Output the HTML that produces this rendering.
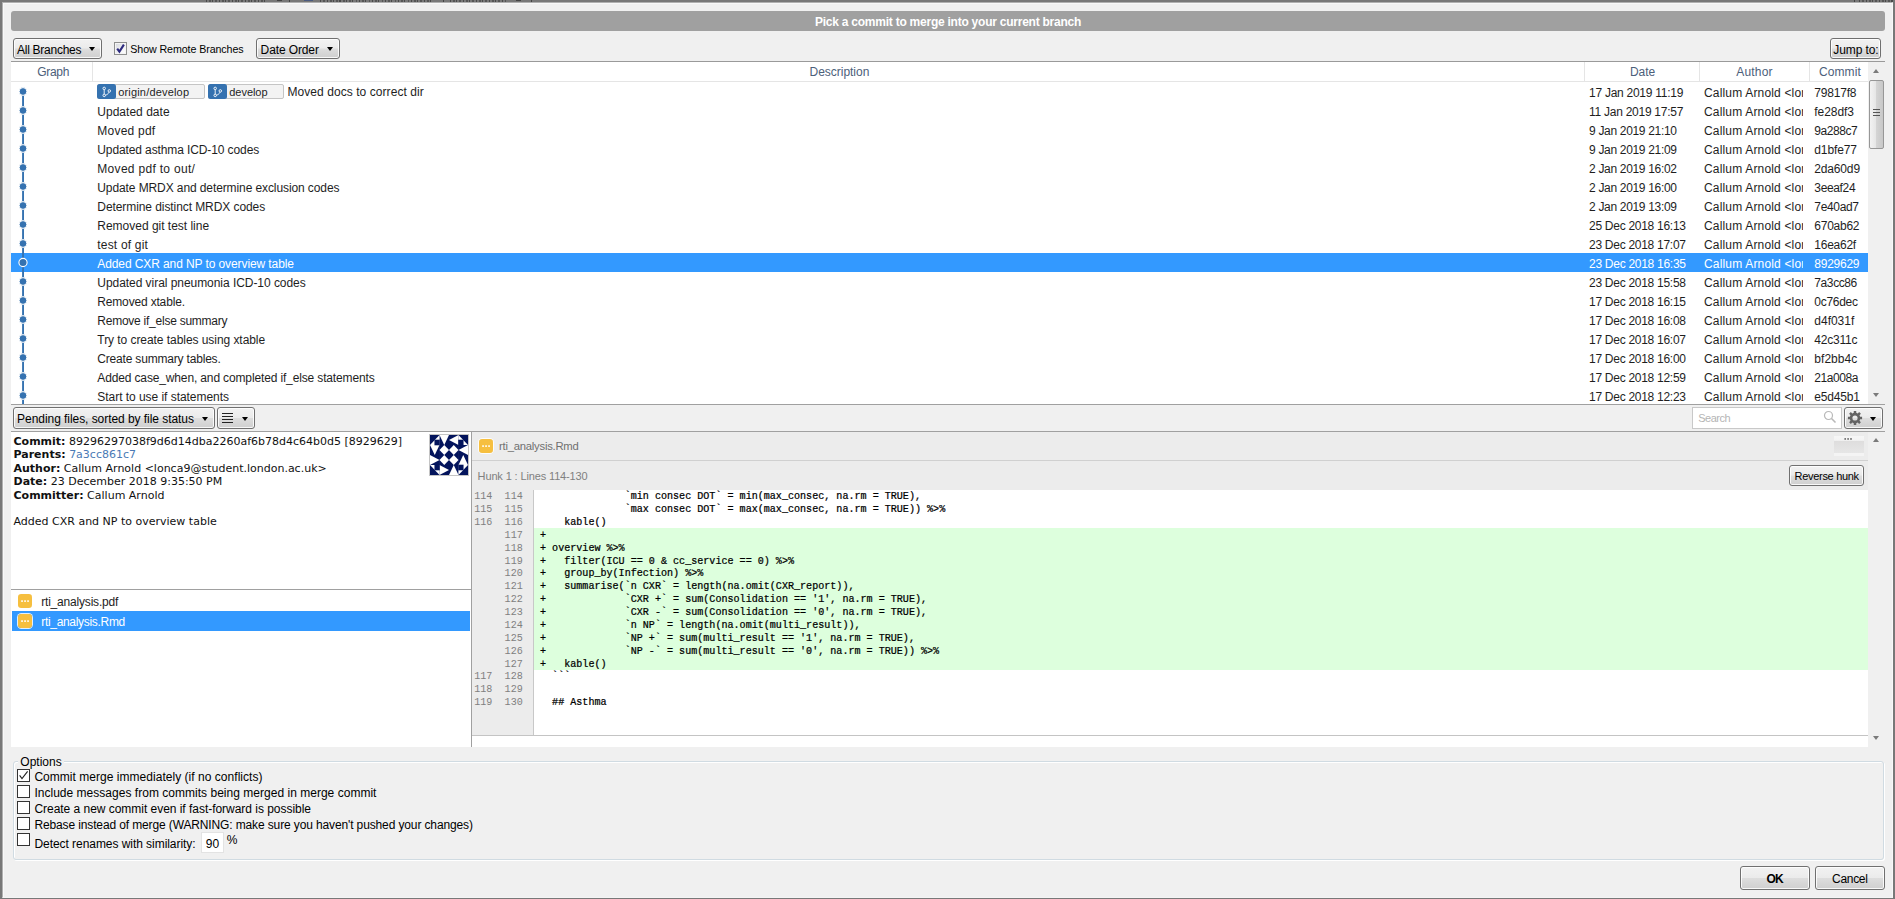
<!DOCTYPE html>
<html lang="en"><head><meta charset="utf-8"><title>Merge</title>
<style>
html,body{margin:0;padding:0;}
body{width:1895px;height:899px;overflow:hidden;background:#f0f0f0;font-family:"Liberation Sans",sans-serif;font-size:12px;color:#1e1e1e;}
#dlg{position:absolute;left:0;top:0;width:1895px;height:899px;background:#f0f0f0;box-shadow:inset 2px 0 0 #787878,inset -2px 0 0 #787878,inset 0 2px 0 #787878,inset 0 -1px 0 #787878;}
#dlg:before{content:'';position:absolute;left:2px;top:2px;right:2px;bottom:1px;border-style:solid;border-width:1px;border-color:#b0b0b0 #f8f8f8 #f4f4f4 #b0b0b0;box-shadow:inset 1px 1px 0 #f8f8f8;}
#dlg>*{position:absolute;}
#dlg *{box-sizing:border-box;}
i{font-style:normal;display:block;}
.t{white-space:pre;color:#1e1e1e;}
.banner{left:11px;top:11px;width:1874px;height:20px;background:#a0a0a0;border-radius:3px;}
.bn{color:#fff;font-weight:700;line-height:20px;margin-top:1px;}
.btn{border:1px solid #707070;border-radius:3px;background:linear-gradient(#f2f2f2 0%,#ebebeb 48%,#dddddd 52%,#cfcfcf 100%);box-shadow:inset 0 0 0 1px rgba(255,255,255,.85);}
.b21{line-height:21px;color:#000;margin-top:2px;}
.b22{line-height:22px;color:#000;margin-top:1px;}
.arr{width:0;height:0;margin-left:0;margin-top:-0.4px;border-left:3.6px solid transparent;border-right:3.6px solid transparent;border-top:4.4px solid #000;}
.chk,.cb{width:13px;height:13px;border:1px solid #8e8f8f;background:#fff;}
.chk{background:linear-gradient(135deg,#d4d7dd,#f4f4f6 60%,#fff);box-shadow:inset 0 0 0 1px #f4f4f4;}
.chk svg,.cb svg{position:absolute;left:-1px;top:-1px;}
.cb{border-color:#333;}
.l8{font-size:10.67px;line-height:15px;color:#000;margin-top:1px;}
.table{left:11px;top:61px;width:1874px;height:343px;background:#fff;border-top:1px solid #9a9a9a;}
.thead{left:11px;top:81px;width:1857px;height:1px;background:#e5e5e5;}
.th{line-height:19px;color:#4c607a;margin-top:1px;}
.vsep{width:1px;top:62px;height:19px;background:#e5e5e5;}
.selrow{left:11px;width:1857px;height:19px;background:#3399ff;}
.td{line-height:19px;margin-top:2px;}
.s{color:#fff;}
.au{width:99px;overflow:hidden;}
.tag{height:15px;border:1px solid #c5c5c5;border-radius:2px;background:#f3f3f3;}
.ti{position:absolute;left:-1px;top:-1px;width:18.5px;height:15px;background:#3572b0;border-radius:2.5px;}
.ti svg{position:absolute;left:0;top:0;}
.tt{font-size:11px;line-height:19px;margin-top:2px;}
.vsb{width:17px;background:#f0f0f0;}
.sa{position:absolute;left:5px;width:0;height:0;border-left:3.5px solid transparent;border-right:3.5px solid transparent;}
.sa.up{border-bottom:4px solid #7a7a7a;}
.sa.dn{border-top:4px solid #7a7a7a;}
.thumb{position:absolute;left:1px;width:15px;border:1px solid #979797;border-radius:2px;background:linear-gradient(90deg,#f3f3f3,#e6e6e6 45%,#d4d4d4 50%,#c8c8c8);}
.grip{position:absolute;left:3px;top:28px;width:7px;height:7px;background:linear-gradient(#555 0,#555 1px,transparent 1px,transparent 3px,#555 3px,#555 4px,transparent 4px,transparent 6px,#555 6px,#555 7px);}
.lines{position:absolute;left:4px;top:5px;width:11px;height:10px;background:linear-gradient(#222 0,#222 1px,transparent 1px,transparent 3px,#222 3px,#222 4px,transparent 4px,transparent 6px,#222 6px,#222 7px,transparent 7px,transparent 9px,#222 9px,#222 10px);}
.search{background:#fff;border:1px solid #c8c8c8;}
.ph{line-height:20px;font-size:11px;color:#b5b5b5;}
.search .mag{position:absolute;right:4px;top:2.3px;}
.gear{position:absolute;left:1.8px;top:2px;}
.hline{height:1px;background:#a0a0a0;}
.vline{width:1px;background:#a0a0a0;}
.info{left:11px;top:432px;width:460px;height:157px;background:#fff;}
.il{font-family:"DejaVu Sans","Liberation Sans",sans-serif;font-size:11px;line-height:13px;color:#111;}
.lnk{color:#4a7ab5;}
.avatar{left:429px;top:434px;width:40px;height:42px;border:1px solid #c4c4c4;background:#fff;}
.avatar svg{display:block;}
.files{left:11px;top:590px;width:460px;height:157px;background:#fff;}
.selfile{left:12px;top:611px;width:458px;height:20px;background:#3399ff;}
.fi{width:14px;height:14px;box-shadow:0 0 0 1px rgba(255,255,255,.85);border-radius:3.5px;}
.fi svg{display:block;}
.fn{line-height:20px;}
.diff{left:472px;top:432px;width:1396px;height:315px;background:#fff;}
.fh{left:472px;top:432px;width:1396px;height:29px;background:#ececec;border-bottom:1px solid #d0d0d0;}
.fhn{line-height:28px;color:#707070;font-size:11.3px;}
.more{left:1834px;top:436px;width:30px;height:20px;background:linear-gradient(#f6f6f6 0,#f3f3f3 22%,#dedddd 25%,#e6e6e6 84%,#f4f4f4 87%,#f4f4f4 100%);}
.hh{left:472px;top:461px;width:1396px;height:29px;background:#ececec;}
.hht{line-height:29px;font-size:11px;color:#808080;margin-top:1px;}
.rh{font-size:11px;margin-top:1px;}
.gut{left:472px;top:490px;width:62px;height:245px;background:#ececec;border-right:1px solid #c8c8c8;}
.addbg{left:534px;top:528px;width:1334px;height:142px;background:#ddffdd;}
.ln,.ct{font-family:"Liberation Mono",monospace;font-size:10.08px;line-height:13px;}
.ln{color:#808080;}
.ct{color:#000;-webkit-text-stroke:0.22px #000;}
.grp{left:13px;top:761px;width:1871px;height:99px;border:1px solid #d0dbe2;border-radius:3px;box-shadow:inset 1px 1px 0 #fff,1px 1px 0 #fff;}
.gl{background:#f0f0f0;line-height:15px;color:#000;}
.ol{line-height:14px;color:#000;}
.num{width:23px;height:21px;background:#fff;border:1px solid #e3e3e3;}
.peek{left:0;top:0;width:1895px;height:2px;overflow:hidden;}
.peek>*{position:absolute;}
.pkt{top:0;height:2px;background:repeating-linear-gradient(90deg,#3a3a3a 0,#3a3a3a 1px,transparent 1px,transparent 3px,#4a4a4a 3px,#4a4a4a 5px,transparent 5px,transparent 6.5px);opacity:.75;}
.pks{top:0;width:1px;height:2px;background:#444;}
.pka{top:0;width:5px;height:1px;background:#444;}
.pkc{top:0;width:9px;height:1px;background:#4a5a80;}

</style></head>
<body>
<div id="dlg">
<div class="peek"><i class="pkt" style="left:206px;width:61px"></i><i class="pkt" style="left:320px;width:112px"></i><i class="pkt" style="left:450px;width:56px"></i><i class="pkt" style="left:1859px;width:34px"></i><i class="pka" style="left:277px"></i><i class="pks" style="left:289px"></i><i class="pkc" style="left:304px"></i><i class="pks" style="left:443px"></i><i class="pka" style="left:516px"></i><i class="pks" style="left:531px"></i><i class="pks" style="left:1854px"></i></div>
<div class="banner"></div><span class="t bn" style="left:815px;top:11px;letter-spacing:-0.241px;">Pick a commit to merge into your current branch</span>
<div class="btn" style="left:13px;top:38px;width:89px;height:21px"></div><i class="arr" style="left:89px;top:47px"></i><span class="t b21" style="left:17px;top:38px;letter-spacing:-0.265px;">All Branches</span>
<div class="chk" style="left:114px;top:42px"><svg width="13" height="13" viewBox="0 0 13 13"><path d="M3.2 6.6 L5.4 9.6 L9.9 2.6" fill="none" stroke="#2d2a7e" stroke-width="2.1"/></svg></div><span class="t l8" style="left:130.3px;top:41px;letter-spacing:-0.086px;">Show Remote Branches</span>
<div class="btn" style="left:256px;top:38px;width:84px;height:21px"></div><i class="arr" style="left:327px;top:47px"></i><span class="t b21" style="left:260.6px;top:38px;letter-spacing:-0.116px;">Date Order</span>
<div class="btn" style="left:1830px;top:38px;width:51px;height:21px"></div><span class="t b21" style="left:1833.3px;top:38px;letter-spacing:-0.091px;">Jump to:</span>
<div class="table"></div><div class="thead"></div>
<span class="t th" style="left:37.2px;top:62px;letter-spacing:-0.292px;">Graph</span><span class="t th" style="left:809.5px;top:62px;letter-spacing:-0.021px;">Description</span><span class="t th" style="left:1630px;top:62px;letter-spacing:-0.09px;">Date</span><span class="t th" style="left:1736.2px;top:62px;letter-spacing:0.207px;">Author</span><span class="t th" style="left:1818.9px;top:62px;letter-spacing:0.109px;">Commit</span><i class="vsep" style="left:92px"></i><i class="vsep" style="left:1584px"></i><i class="vsep" style="left:1699px"></i><i class="vsep" style="left:1809px"></i>
<div class="tag" style="left:97px;top:84px;width:108px"><i class="ti"><svg width="19" height="15" viewBox="0 0 19 15"><g fill="none" stroke="#fff" stroke-width="0.9"><circle cx="7.2" cy="4.4" r="1.25"/><circle cx="7.2" cy="11.4" r="1.25"/><circle cx="12.3" cy="6.9" r="1.25"/><path d="M7.2 5.7V10.1M12 8.2C11.2 10.2 9.6 10.8 8.4 11.2"/></g></svg></i></div><span class="t tt" style="left:118.2px;top:81px;letter-spacing:0.179px;">origin/develop</span><div class="tag" style="left:208px;top:84px;width:76px"><i class="ti"><svg width="19" height="15" viewBox="0 0 19 15"><g fill="none" stroke="#fff" stroke-width="0.9"><circle cx="7.2" cy="4.4" r="1.25"/><circle cx="7.2" cy="11.4" r="1.25"/><circle cx="12.3" cy="6.9" r="1.25"/><path d="M7.2 5.7V10.1M12 8.2C11.2 10.2 9.6 10.8 8.4 11.2"/></g></svg></i></div><span class="t tt" style="left:229.3px;top:81px;letter-spacing:-0.05px;">develop</span><span class="t td" style="left:287.4px;top:81px;letter-spacing:0.067px;">Moved docs to correct dir</span><span class="t td" style="left:1589px;top:82px;letter-spacing:-0.261px;">17 Jan 2019 11:19</span><span class="t td au" style="left:1704px;top:82px;letter-spacing:0.171px">Callum Arnold &lt;lon</span><span class="t td" style="left:1814.3px;top:82px;letter-spacing:-0.199px;">79817f8</span>
<span class="t td" style="left:97.3px;top:101px;letter-spacing:0.02px;">Updated date</span><span class="t td" style="left:1589px;top:101px;letter-spacing:-0.261px;">11 Jan 2019 17:57</span><span class="t td au" style="left:1704px;top:101px;letter-spacing:0.171px">Callum Arnold &lt;lon</span><span class="t td" style="left:1814.3px;top:101px;letter-spacing:-0.064px;">fe28df3</span>
<span class="t td" style="left:97.3px;top:120px;letter-spacing:0.228px;">Moved pdf</span><span class="t td" style="left:1589px;top:120px;letter-spacing:-0.316px;">9 Jan 2019 21:10</span><span class="t td au" style="left:1704px;top:120px;letter-spacing:0.171px">Callum Arnold &lt;lon</span><span class="t td" style="left:1814.3px;top:120px;letter-spacing:-0.435px;">9a288c7</span>
<span class="t td" style="left:97.3px;top:139px;letter-spacing:-0.11px;">Updated asthma ICD-10 codes</span><span class="t td" style="left:1589px;top:139px;letter-spacing:-0.316px;">9 Jan 2019 21:09</span><span class="t td au" style="left:1704px;top:139px;letter-spacing:0.171px">Callum Arnold &lt;lon</span><span class="t td" style="left:1814.3px;top:139px;letter-spacing:-0.113px;">d1bfe77</span>
<span class="t td" style="left:97.3px;top:158px;letter-spacing:0.304px;">Moved pdf to out/</span><span class="t td" style="left:1589px;top:158px;letter-spacing:-0.316px;">2 Jan 2019 16:02</span><span class="t td au" style="left:1704px;top:158px;letter-spacing:0.171px">Callum Arnold &lt;lon</span><span class="t td" style="left:1814.3px;top:158px;letter-spacing:-0.16px;">2da60d9</span>
<span class="t td" style="left:97.3px;top:177px;letter-spacing:-0.099px;">Update MRDX and determine exclusion codes</span><span class="t td" style="left:1589px;top:177px;letter-spacing:-0.316px;">2 Jan 2019 16:00</span><span class="t td au" style="left:1704px;top:177px;letter-spacing:0.171px">Callum Arnold &lt;lon</span><span class="t td" style="left:1814.3px;top:177px;letter-spacing:-0.342px;">3eeaf24</span>
<span class="t td" style="left:97.3px;top:196px;letter-spacing:-0.078px;">Determine distinct MRDX codes</span><span class="t td" style="left:1589px;top:196px;letter-spacing:-0.316px;">2 Jan 2019 13:09</span><span class="t td au" style="left:1704px;top:196px;letter-spacing:0.171px">Callum Arnold &lt;lon</span><span class="t td" style="left:1814.3px;top:196px;letter-spacing:-0.331px;">7e40ad7</span>
<span class="t td" style="left:97.3px;top:215px;letter-spacing:-0.013px;">Removed git test line</span><span class="t td" style="left:1589px;top:215px;letter-spacing:-0.278px;">25 Dec 2018 16:13</span><span class="t td au" style="left:1704px;top:215px;letter-spacing:0.171px">Callum Arnold &lt;lon</span><span class="t td" style="left:1814.3px;top:215px;letter-spacing:-0.246px;">670ab62</span>
<span class="t td" style="left:97.3px;top:234px;letter-spacing:0.182px;">test of git</span><span class="t td" style="left:1589px;top:234px;letter-spacing:-0.278px;">23 Dec 2018 17:07</span><span class="t td au" style="left:1704px;top:234px;letter-spacing:0.171px">Callum Arnold &lt;lon</span><span class="t td" style="left:1814.3px;top:234px;letter-spacing:-0.256px;">16ea62f</span>
<div class="selrow" style="top:253px"></div><span class="t td s" style="left:97.3px;top:253px;letter-spacing:-0.097px;">Added CXR and NP to overview table</span><span class="t td s" style="left:1589px;top:253px;letter-spacing:-0.278px;">23 Dec 2018 16:35</span><span class="t td au s" style="left:1704px;top:253px;letter-spacing:0.171px">Callum Arnold &lt;lon</span><span class="t td s" style="left:1814.3px;top:253px;letter-spacing:-0.246px;">8929629</span>
<span class="t td" style="left:97.3px;top:272px;letter-spacing:-0.048px;">Updated viral pneumonia ICD-10 codes</span><span class="t td" style="left:1589px;top:272px;letter-spacing:-0.278px;">23 Dec 2018 15:58</span><span class="t td au" style="left:1704px;top:272px;letter-spacing:0.171px">Callum Arnold &lt;lon</span><span class="t td" style="left:1814.3px;top:272px;letter-spacing:-0.396px;">7a3cc86</span>
<span class="t td" style="left:97.3px;top:291px;letter-spacing:-0.17px;">Removed xtable.</span><span class="t td" style="left:1589px;top:291px;letter-spacing:-0.278px;">17 Dec 2018 16:15</span><span class="t td au" style="left:1704px;top:291px;letter-spacing:0.171px">Callum Arnold &lt;lon</span><span class="t td" style="left:1814.3px;top:291px;letter-spacing:-0.282px;">0c76dec</span>
<span class="t td" style="left:97.3px;top:310px;letter-spacing:-0.244px;">Remove if_else summary</span><span class="t td" style="left:1589px;top:310px;letter-spacing:-0.278px;">17 Dec 2018 16:08</span><span class="t td au" style="left:1704px;top:310px;letter-spacing:0.171px">Callum Arnold &lt;lon</span><span class="t td" style="left:1814.3px;top:310px;letter-spacing:-0.007px;">d4f031f</span>
<span class="t td" style="left:97.3px;top:329px;letter-spacing:-0.056px;">Try to create tables using xtable</span><span class="t td" style="left:1589px;top:329px;letter-spacing:-0.278px;">17 Dec 2018 16:07</span><span class="t td au" style="left:1704px;top:329px;letter-spacing:0.171px">Callum Arnold &lt;lon</span><span class="t td" style="left:1814.3px;top:329px;letter-spacing:-0.212px;">42c311c</span>
<span class="t td" style="left:97.3px;top:348px;letter-spacing:-0.186px;">Create summary tables.</span><span class="t td" style="left:1589px;top:348px;letter-spacing:-0.278px;">17 Dec 2018 16:00</span><span class="t td au" style="left:1704px;top:348px;letter-spacing:0.171px">Callum Arnold &lt;lon</span><span class="t td" style="left:1814.3px;top:348px;letter-spacing:0.042px;">bf2bb4c</span>
<span class="t td" style="left:97.3px;top:367px;letter-spacing:-0.141px;">Added case_when, and completed if_else statements</span><span class="t td" style="left:1589px;top:367px;letter-spacing:-0.278px;">17 Dec 2018 12:59</span><span class="t td au" style="left:1704px;top:367px;letter-spacing:0.171px">Callum Arnold &lt;lon</span><span class="t td" style="left:1814.3px;top:367px;letter-spacing:-0.446px;">21a008a</span>
<span class="t td" style="left:97.3px;top:386px;letter-spacing:-0.04px;">Start to use if statements</span><span class="t td" style="left:1589px;top:386px;letter-spacing:-0.278px;">17 Dec 2018 12:23</span><span class="t td au" style="left:1704px;top:386px;letter-spacing:0.171px">Callum Arnold &lt;lon</span><span class="t td" style="left:1814.3px;top:386px;letter-spacing:-0.188px;">e5d45b1</span>
<svg class="graph" style="left:11px;top:82px" width="30" height="322" viewBox="0 0 30 322"><rect x="11.1" y="9.5" width="1.9" height="322" fill="#3572b0"/><circle cx="12" cy="9.5" r="3.9" fill="#3572b0" stroke="#fff" stroke-width="1"/><circle cx="12" cy="28.5" r="3.9" fill="#3572b0" stroke="#fff" stroke-width="1"/><circle cx="12" cy="47.5" r="3.9" fill="#3572b0" stroke="#fff" stroke-width="1"/><circle cx="12" cy="66.5" r="3.9" fill="#3572b0" stroke="#fff" stroke-width="1"/><circle cx="12" cy="85.5" r="3.9" fill="#3572b0" stroke="#fff" stroke-width="1"/><circle cx="12" cy="104.5" r="3.9" fill="#3572b0" stroke="#fff" stroke-width="1"/><circle cx="12" cy="123.5" r="3.9" fill="#3572b0" stroke="#fff" stroke-width="1"/><circle cx="12" cy="142.5" r="3.9" fill="#3572b0" stroke="#fff" stroke-width="1"/><circle cx="12" cy="161.5" r="3.9" fill="#3572b0" stroke="#fff" stroke-width="1"/><circle cx="12" cy="180.5" r="4.1" fill="#3572b0" stroke="#fff" stroke-width="1.1"/><circle cx="12" cy="199.5" r="3.9" fill="#3572b0" stroke="#fff" stroke-width="1"/><circle cx="12" cy="218.5" r="3.9" fill="#3572b0" stroke="#fff" stroke-width="1"/><circle cx="12" cy="237.5" r="3.9" fill="#3572b0" stroke="#fff" stroke-width="1"/><circle cx="12" cy="256.5" r="3.9" fill="#3572b0" stroke="#fff" stroke-width="1"/><circle cx="12" cy="275.5" r="3.9" fill="#3572b0" stroke="#fff" stroke-width="1"/><circle cx="12" cy="294.5" r="3.9" fill="#3572b0" stroke="#fff" stroke-width="1"/><circle cx="12" cy="313.5" r="3.9" fill="#3572b0" stroke="#fff" stroke-width="1"/></svg>
<div class="vsb" style="left:1868px;top:62px;height:342px"><i class="sa up" style="top:7px"></i><div class="thumb" style="top:18px;height:69px"><i class="grip"></i></div><i class="sa dn" style="top:331px"></i></div>
<div class="hline" style="left:11px;top:404px;width:1874px"></div>
<div class="btn" style="left:13px;top:407px;width:202px;height:22px"></div><i class="arr" style="left:202px;top:417px"></i><span class="t b22" style="left:17.1px;top:407px;letter-spacing:-0.055px;">Pending files, sorted by file status</span>
<div class="btn" style="left:217px;top:407px;width:38px;height:22px"><i class="lines"></i></div><i class="arr" style="left:242px;top:417px"></i>
<div class="search" style="left:1692px;top:407px;width:150px;height:22px"><svg class="mag" width="14" height="14" viewBox="0 0 14 14"><circle cx="5.5" cy="5.5" r="4" fill="none" stroke="#b8b8b8" stroke-width="1.2"/><path d="M8.5 8.5L12.5 12.5" stroke="#b8b8b8" stroke-width="1.6"/></svg></div><span class="t ph" style="left:1698.3px;top:408px;letter-spacing:-0.51px;">Search</span>
<div class="btn" style="left:1844px;top:407px;width:39px;height:22px"><svg class="gear" width="16" height="16" viewBox="0 0 16 16"><path fill-rule="evenodd" fill="#636363" d="M13.15 6.76 L15.09 6.76 L15.09 9.24 L13.15 9.24 L12.52 10.77 L13.89 12.14 L12.14 13.89 L10.77 12.52 L9.24 13.15 L9.24 15.09 L6.76 15.09 L6.76 13.15 L5.23 12.52 L3.86 13.89 L2.11 12.14 L3.48 10.77 L2.85 9.24 L0.91 9.24 L0.91 6.76 L2.85 6.76 L3.48 5.23 L2.11 3.86 L3.86 2.11 L5.23 3.48 L6.76 2.85 L6.76 0.91 L9.24 0.91 L9.24 2.85 L10.77 3.48 L12.14 2.11 L13.89 3.86 L12.52 5.23Z M10.60 8.00 A2.6 2.6 0 1 0 5.40 8.00 A2.6 2.6 0 1 0 10.60 8.00Z"/></svg></div><i class="arr" style="left:1870px;top:417px"></i>
<div class="hline" style="left:11px;top:431px;width:1874px"></div>
<div class="info"></div>
<span class="t il" style="left:13.5px;top:435px"><b>Commit:</b> 89296297038f9d6d14dba2260af6b78d4c64b0d5 [8929629]</span><span class="t il" style="left:13.5px;top:448px"><b>Parents:</b> <span class="lnk">7a3cc861c7</span></span><span class="t il" style="left:13.5px;top:462px"><b>Author:</b> Callum Arnold &lt;lonca9@student.london.ac.uk&gt;</span><span class="t il" style="left:13.5px;top:475px"><b>Date:</b> 23 December 2018 9:35:50 PM</span><span class="t il" style="left:13.5px;top:489px"><b>Committer:</b> Callum Arnold</span><span class="t il" style="left:13.5px;top:515px">Added CXR and NP to overview table</span>
<div class="avatar"><svg width="38" height="40" viewBox="0 0 4 4" preserveAspectRatio="none"><rect x="0.97" y="-0.03" width="1.06" height="1.06" fill="#03145c"/><rect x="1.97" y="-0.03" width="1.06" height="1.06" fill="#03145c"/><rect x="2.97" y="0.97" width="1.06" height="1.06" fill="#03145c"/><rect x="2.97" y="1.97" width="1.06" height="1.06" fill="#03145c"/><rect x="1.97" y="2.97" width="1.06" height="1.06" fill="#03145c"/><rect x="0.97" y="2.97" width="1.06" height="1.06" fill="#03145c"/><rect x="-0.03" y="1.97" width="1.06" height="1.06" fill="#03145c"/><rect x="-0.03" y="0.97" width="1.06" height="1.06" fill="#03145c"/><rect x="0.97" y="0.97" width="1.06" height="1.06" fill="#03145c"/><rect x="1.97" y="0.97" width="1.06" height="1.06" fill="#03145c"/><rect x="0.97" y="1.97" width="1.06" height="1.06" fill="#03145c"/><rect x="1.97" y="1.97" width="1.06" height="1.06" fill="#03145c"/><polygon points="1,0 2,0 1.5,1" fill="#fff"/><polygon points="3,0 3,1 2,0.5" fill="#fff"/><polygon points="4,1 4,2 3,1.5" fill="#fff"/><polygon points="3,3 4,3 3.5,2" fill="#fff"/><polygon points="2,4 3,4 2.5,3" fill="#fff"/><polygon points="1,3 1,4 2,3.5" fill="#fff"/><polygon points="0,2 0,3 1,2.5" fill="#fff"/><polygon points="0,1 1,1 0.5,2" fill="#fff"/><polygon points="1.5,1 2,1.5 1.5,2 1,1.5" fill="#fff"/><polygon points="2.5,1 3,1.5 2.5,2 2,1.5" fill="#fff"/><polygon points="1.5,2 2,2.5 1.5,3 1,2.5" fill="#fff"/><polygon points="2.5,2 3,2.5 2.5,3 2,2.5" fill="#fff"/><rect x="0" y="0" width="1" height="1" fill="#fff"/><rect x="3" y="0" width="1" height="1" fill="#fff"/><rect x="3" y="3" width="1" height="1" fill="#fff"/><rect x="0" y="3" width="1" height="1" fill="#fff"/><polygon points="0,0 1,0 0,1" fill="#03145c"/><rect x="0.47" y="0.47" width=".56" height=".56" fill="#03145c"/><polygon points="4,0 4,1 3,0" fill="#03145c"/><rect x="2.97" y="0.47" width=".56" height=".56" fill="#03145c"/><polygon points="4,4 3,4 4,3" fill="#03145c"/><rect x="2.97" y="2.97" width=".56" height=".56" fill="#03145c"/><polygon points="0,4 0,3 1,4" fill="#03145c"/><rect x="0.47" y="2.97" width=".56" height=".56" fill="#03145c"/></svg></div>
<div class="hline" style="left:11px;top:589px;width:460px"></div>
<div class="files"></div><i class="fi" style="left:18px;top:594px"><svg width="14" height="14" viewBox="0 0 14 14"><rect width="14" height="14" rx="3.2" fill="#f6bf3f"/><g fill="#fff"><rect x="3.2" y="6.3" width="1.7" height="1.6"/><rect x="6.2" y="6.3" width="1.7" height="1.6"/><rect x="9.2" y="6.3" width="1.7" height="1.6"/></g></svg></i><span class="t fn" style="left:41.2px;top:592px;letter-spacing:-0.19px;">rti_analysis.pdf</span><div class="selfile"></div><i class="fi" style="left:18px;top:614px;"><svg width="14" height="14" viewBox="0 0 14 14"><rect width="14" height="14" rx="3.2" fill="#f6bf3f"/><g fill="#fff"><rect x="3.2" y="6.3" width="1.7" height="1.6"/><rect x="6.2" y="6.3" width="1.7" height="1.6"/><rect x="9.2" y="6.3" width="1.7" height="1.6"/></g></svg></i><span class="t fn s" style="left:41.2px;top:612px;letter-spacing:-0.306px;">rti_analysis.Rmd</span>
<div class="diff"></div><i class="vline" style="left:471px;top:432px;height:315px"></i>
<div class="fh"></div><i class="fi" style="left:479px;top:439px"><svg width="14" height="14" viewBox="0 0 14 14"><rect width="14" height="14" rx="3.2" fill="#f6bf3f"/><g fill="#fff"><rect x="3.2" y="6.3" width="1.7" height="1.6"/><rect x="6.2" y="6.3" width="1.7" height="1.6"/><rect x="9.2" y="6.3" width="1.7" height="1.6"/></g></svg></i><span class="t fhn" style="left:499.1px;top:432px;letter-spacing:-0.256px;">rti_analysis.Rmd</span><div class="more"><svg width="30" height="20" viewBox="0 0 30 20"><g fill="#6e6e6e"><rect x="10.4" y="2.1" width="1.6" height="1.7"/><rect x="13.3" y="2.1" width="1.6" height="1.7"/><rect x="16.2" y="2.1" width="1.6" height="1.7"/></g></svg></div>
<div class="hh"></div><span class="t hht" style="left:477.6px;top:461px;letter-spacing:-0.134px;">Hunk 1 : Lines 114-130</span><div class="btn" style="left:1789px;top:465px;width:75px;height:21px"></div><span class="t b21 rh" style="left:1794.6px;top:465px;letter-spacing:-0.306px;">Reverse hunk</span>
<div class="gut"></div><div class="addbg"></div><div class="hline" style="left:472px;top:735px;width:1396px;background:#c4c4c4"></div>
<span class="t ln" style="left:474.2px;top:490px">114</span><span class="t ln" style="left:504.6px;top:490px">114</span><span class="t ct" style="left:540px;top:490px">              `min consec DOT` = min(max_consec, na.rm = TRUE),</span>
<span class="t ln" style="left:474.2px;top:503px">115</span><span class="t ln" style="left:504.6px;top:503px">115</span><span class="t ct" style="left:540px;top:503px">              `max consec DOT` = max(max_consec, na.rm = TRUE)) %&gt;%</span>
<span class="t ln" style="left:474.2px;top:516px">116</span><span class="t ln" style="left:504.6px;top:516px">116</span><span class="t ct" style="left:540px;top:516px">    kable()</span>
<span class="t ln" style="left:504.6px;top:529px">117</span><span class="t ct" style="left:540px;top:529px">+</span>
<span class="t ln" style="left:504.6px;top:542px">118</span><span class="t ct" style="left:540px;top:542px">+ overview %&gt;%</span>
<span class="t ln" style="left:504.6px;top:555px">119</span><span class="t ct" style="left:540px;top:555px">+   filter(ICU == 0 &amp; cc_service == 0) %&gt;%</span>
<span class="t ln" style="left:504.6px;top:567px">120</span><span class="t ct" style="left:540px;top:567px">+   group_by(Infection) %&gt;%</span>
<span class="t ln" style="left:504.6px;top:580px">121</span><span class="t ct" style="left:540px;top:580px">+   summarise(`n CXR` = length(na.omit(CXR_report)),</span>
<span class="t ln" style="left:504.6px;top:593px">122</span><span class="t ct" style="left:540px;top:593px">+             `CXR +` = sum(Consolidation == &#x27;1&#x27;, na.rm = TRUE),</span>
<span class="t ln" style="left:504.6px;top:606px">123</span><span class="t ct" style="left:540px;top:606px">+             `CXR -` = sum(Consolidation == &#x27;0&#x27;, na.rm = TRUE),</span>
<span class="t ln" style="left:504.6px;top:619px">124</span><span class="t ct" style="left:540px;top:619px">+             `n NP` = length(na.omit(multi_result)),</span>
<span class="t ln" style="left:504.6px;top:632px">125</span><span class="t ct" style="left:540px;top:632px">+             `NP +` = sum(multi_result == &#x27;1&#x27;, na.rm = TRUE),</span>
<span class="t ln" style="left:504.6px;top:645px">126</span><span class="t ct" style="left:540px;top:645px">+             `NP -` = sum(multi_result == &#x27;0&#x27;, na.rm = TRUE)) %&gt;%</span>
<span class="t ln" style="left:504.6px;top:658px">127</span><span class="t ct" style="left:540px;top:658px">+   kable()</span>
<span class="t ln" style="left:474.2px;top:670px">117</span><span class="t ln" style="left:504.6px;top:670px">128</span><span class="t ct" style="left:540px;top:670px">  ```</span>
<span class="t ln" style="left:474.2px;top:683px">118</span><span class="t ln" style="left:504.6px;top:683px">129</span>
<span class="t ln" style="left:474.2px;top:696px">119</span><span class="t ln" style="left:504.6px;top:696px">130</span><span class="t ct" style="left:540px;top:696px">  ## Asthma</span>
<div class="vsb" style="left:1868px;top:432px;height:315px"><i class="sa up" style="top:6px"></i><i class="sa dn" style="top:304px"></i></div>
<div class="grp"></div><span class="t gl" style="left:18.3px;top:755px;letter-spacing:0.006px;padding:0 2px;">Options</span>
<div class="cb" style="left:17px;top:769px"><svg width="13" height="13" viewBox="0 0 13 13"><path d="M2.6 6.4L5 9.6L10.6 2.4" fill="none" stroke="#222" stroke-width="1.1"/></svg></div><span class="t ol" style="left:34.4px;top:770px;letter-spacing:0.033px;">Commit merge immediately (if no conflicts)</span>
<div class="cb" style="left:17px;top:785px"></div><span class="t ol" style="left:34.4px;top:786px;letter-spacing:0.022px;">Include messages from commits being merged in merge commit</span>
<div class="cb" style="left:17px;top:801px"></div><span class="t ol" style="left:34.4px;top:802px;letter-spacing:-0.029px;">Create a new commit even if fast-forward is possible</span>
<div class="cb" style="left:17px;top:817px"></div><span class="t ol" style="left:34.4px;top:818px;letter-spacing:-0.127px;">Rebase instead of merge (WARNING: make sure you haven&#x27;t pushed your changes)</span>
<div class="cb" style="left:17px;top:833px"></div><span class="t ol" style="left:34.4px;top:837px;letter-spacing:-0.049px;">Detect renames with similarity:</span>
<div class="num" style="left:201px;top:832px"></div><span class="t ol" style="left:205.8px;top:837px;letter-spacing:0.02px;">90</span><span class="t ol" style="left:226.7px;top:833px;">%</span>
<div class="btn" style="left:1740px;top:866px;width:70px;height:24px"></div><span class="t b22" style="left:1766.4px;top:867px;letter-spacing:-0.7px;font-weight:700;">OK</span><div class="btn" style="left:1815px;top:866px;width:70px;height:24px"></div><span class="t b22" style="left:1832.1px;top:867px;letter-spacing:-0.327px;">Cancel</span>
</div>
</body></html>
